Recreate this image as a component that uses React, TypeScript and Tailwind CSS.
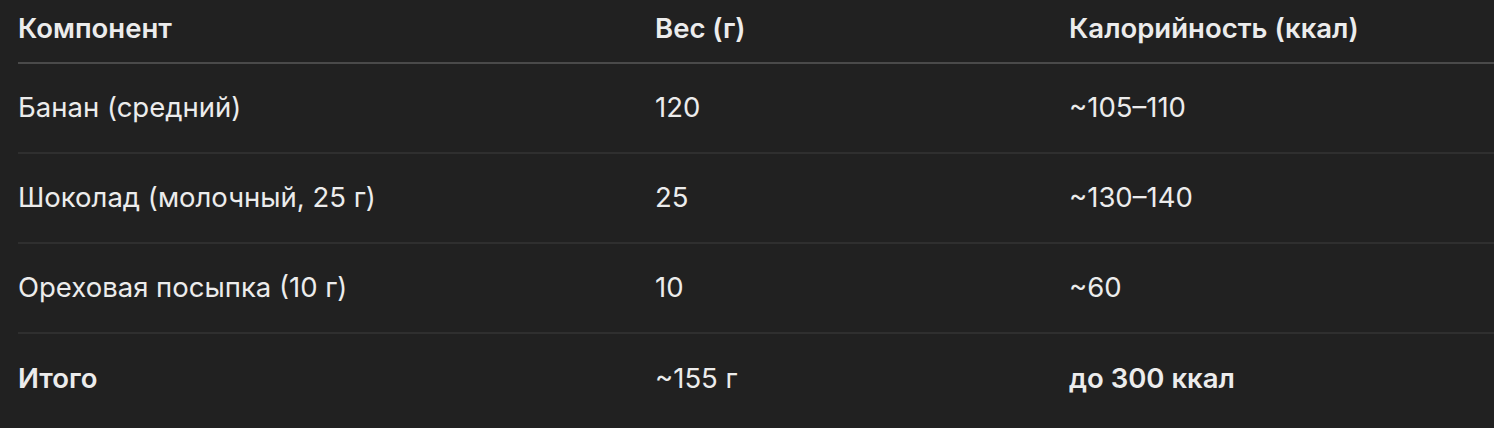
import React from "react";

const rows = [
  ["Банан (средний)", "120", "~105–110"],
  ["Шоколад (молочный, 25 г)", "25", "~130–140"],
  ["Ореховая посыпка (10 г)", "10", "~60"],
];

export default function App() {
  return (
    <div
      className="w-[1494px] h-[428px] bg-[#212121] pl-[18px] text-[#ececec] overflow-hidden"
      style={{ fontFamily: "Inter, 'Noto Sans', sans-serif" }}
    >
      <div className="grid grid-cols-[637px_414px_1fr] h-[64px] items-center border-b-2 border-[#4a4a4a] pb-[4px] text-[27.5px] font-semibold">
        <div>Компонент</div>
        <div>Вес (г)</div>
        <div>Калорийность (ккал)</div>
      </div>
      {rows.map((r, i) => (
        <div
          key={i}
          className="grid grid-cols-[637px_414px_1fr] h-[90px] items-center border-b-2 border-[#2f2f2f] text-[27.5px]"
        >
          <div>{r[0]}</div>
          <div>{r[1]}</div>
          <div>{r[2]}</div>
        </div>
      ))}
      <div className="grid grid-cols-[637px_414px_1fr] h-[92px] items-center text-[27.5px] pb-[2px]">
        <div className="font-semibold">Итого</div>
        <div>~155 г</div>
        <div className="font-semibold">до 300 ккал</div>
      </div>
    </div>
  );
}
